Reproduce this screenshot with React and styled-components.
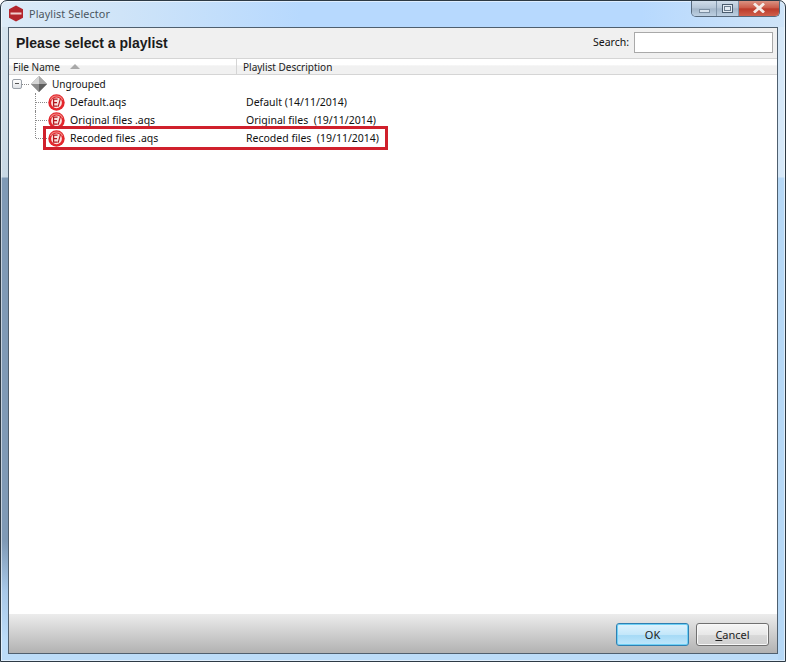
import styled, { createGlobalStyle } from "styled-components";

const GlobalStyle = createGlobalStyle`
  html, body {
    margin: 0;
    padding: 0;
    background: #fff;
  }
  * {
    box-sizing: border-box;
  }
`;

const rows = [
  { name: "Default.aqs", description: "Default (14/11/2014)" },
  { name: "Original files .aqs", description: "Original files  (19/11/2014)" },
  { name: "Recoded files .aqs", description: "Recoded files  (19/11/2014)", marked: true },
];

function AppLogo() {
  return (
    <svg width="16" height="17" viewBox="0 0 16 17">
      <path d="M8 0.5 L15 4.3 L15 12.7 L8 16.5 L1 12.7 L1 4.3 Z" fill="#b3262d" />
      <rect x="2.5" y="7.5" width="11" height="2" fill="#f0cfcf" />
    </svg>
  );
}

function GroupIcon() {
  return (
    <svg width="16" height="16" viewBox="0 0 16 16">
      <path d="M8 0 L16 8 L8 16 L0 8 Z" fill="#8f8f8f" />
      <path d="M8 0 L0 8 L8 8 Z" fill="#d6d6d6" />
      <path d="M8 0 L16 8 L8 8 Z" fill="#a8a8a8" />
      <path d="M0 8 L8 16 L8 8 Z" fill="#8c8c8c" />
      <path d="M16 8 L8 16 L8 8 Z" fill="#5f5f5f" />
    </svg>
  );
}

function PlaylistIcon() {
  return (
    <svg width="17" height="17" viewBox="0 0 17 17">
      <circle cx="8.5" cy="8.5" r="8.2" fill="#e3262c" />
      <path d="M2.5 6 A6.5 6.5 0 0 1 14.5 6" fill="none" stroke="#f28b86" strokeWidth="1.2" />
      <circle cx="8.5" cy="8.8" r="5.4" fill="#fbe3e0" />
      <path d="M9.6 5.2 H5.6 V12.2 H9.6 M5.6 8.6 H9" fill="none" stroke="#b3161c" strokeWidth="1.3" />
      <path d="M12.4 4.6 L10.2 12.6" stroke="#b3161c" strokeWidth="1.1" />
    </svg>
  );
}

export default function App() {
  return (
    <Window>
      <GlobalStyle />
      <TitleBar>
        <TitleLeft>
          <AppLogo />
          <TitleText>Playlist Selector</TitleText>
        </TitleLeft>
        <Controls>
          <MinButton>
            <MinimizeGlyph />
          </MinButton>
          <MaxButton>
            <MaximizeGlyph />
          </MaxButton>
          <CloseButton>
            <svg width="14" height="10" viewBox="0 0 14 10">
              <path d="M2 0.5 L12 9.5 M12 0.5 L2 9.5" stroke="#f4ebe7" strokeWidth="2.8" />
            </svg>
          </CloseButton>
        </Controls>
      </TitleBar>
      <Client>
        <Header>
          <Heading>Please select a playlist</Heading>
          <SearchBox>
            <SearchLabel>Search:</SearchLabel>
            <SearchInput />
          </SearchBox>
        </Header>
        <ColumnHeader>
          <NameColumn>
            File Name
            <SortArrow />
          </NameColumn>
          <DescriptionColumn>Playlist Description</DescriptionColumn>
        </ColumnHeader>
        <Tree>
          <GroupRow>
            <Expander />
            <Dots />
            <GroupIcon />
            <GroupLabel>Ungrouped</GroupLabel>
          </GroupRow>
          {rows.map((row, i) => (
            <FileRow key={row.name}>
              <Guide $last={i === rows.length - 1} />
              <PlaylistIcon />
              <FileName>{row.name}</FileName>
              <FileDescription>{row.description}</FileDescription>
              {row.marked && <Marker />}
            </FileRow>
          ))}
        </Tree>
        <Footer>
          <OkButton>OK</OkButton>
          <CancelButton>
            <u>C</u>ancel
          </CancelButton>
        </Footer>
      </Client>
    </Window>
  );
}

const uiFont = `"Noto Sans", "Open Sans", sans-serif`;

const Window = styled.div`
  width: 786px;
  height: 662px;
  display: flex;
  flex-direction: column;
  padding: 0 7px 7px;
  border: 1px solid #2d3a45;
  border-radius: 7px 7px 0 0;
  box-shadow: inset 0 0 0 1px rgba(255, 255, 255, 0.55);
  background-color: #bcdcf8;
  background-image:
    linear-gradient(90deg, #dcebf7 0, #cfe4f8 120px, #b7d9fe 300px, #b7d9fe 640px, #cfe4f8 100%),
    linear-gradient(180deg, #d8e6f0 0, #c8d8e4 176px, #7f9ab6 177px, #7f9ab6 540px, #a8c8e8 590px, #bcdcf8 640px),
    linear-gradient(180deg, #d6e8f8 0, #d6e8f8 176px, #b6d8f6 177px, #b6d8f6 100%);
  background-size: 100% 26px, 7px 100%, 7px 100%;
  background-position: top, left, right;
  background-repeat: no-repeat;
  font-family: ${uiFont};
  overflow: hidden;
`;

const TitleBar = styled.div`
  height: 26px;
  flex: none;
  margin-right: -2px;
  display: flex;
  justify-content: space-between;
  align-items: flex-start;
`;

const TitleLeft = styled.div`
  display: flex;
  align-items: center;
  gap: 5px;
  height: 25px;
`;

const TitleText = styled.span`
  font-size: 10.8px;
  letter-spacing: 0.1px;
  color: #4a5560;
`;

const Controls = styled.div`
  display: flex;
  height: 17px;
  margin-top: -1px;
  border: 1px solid #56697c;
  border-top: none;
  border-radius: 0 0 5px 5px;
  overflow: hidden;
`;

const MinButton = styled.div`
  width: 25px;
  display: flex;
  align-items: center;
  justify-content: center;
  border-right: 1px solid #8095aa;
  background: linear-gradient(#d3e0ec, #b4c5d6 50%, #a3b6c9 55%, #bdd0e2);
`;

const MaxButton = styled(MinButton)`
  width: 22px;
`;

const CloseButton = styled.div`
  width: 40px;
  display: flex;
  align-items: center;
  justify-content: center;
  background: linear-gradient(#dd9a8a, #cb5a48 50%, #bb3a2a 55%, #d0604c);
`;

const MinimizeGlyph = styled.span`
  width: 11px;
  height: 4px;
  margin-top: 5px;
  background: #d9e4ee;
  border: 1px solid #7b8ea1;
`;

const MaximizeGlyph = styled.span`
  width: 11px;
  height: 9px;
  border: 1px solid #4a5c6e;
  background: #e3ebf3;
  box-shadow: inset 0 0 0 1px #e3ebf3, inset 0 0 0 2px #6b7d8e;
`;

const Client = styled.div`
  flex: 1;
  display: flex;
  flex-direction: column;
  background: #fff;
  border: 1px solid #4f5f6e;
  min-height: 0;
`;

const Header = styled.div`
  height: 31px;
  flex: none;
  display: flex;
  justify-content: space-between;
  align-items: center;
  padding: 0 4px 0 7px;
  background: #f0f0f0;
  border-bottom: 1px solid #d5d5d5;
`;

const Heading = styled.h1`
  margin: 0;
  font-family: "Liberation Sans", Arial, sans-serif;
  font-size: 14px;
  font-weight: 700;
  color: #1b1b1b;
`;

const SearchBox = styled.div`
  display: flex;
  align-items: center;
  gap: 5px;
  margin-bottom: 2px;
`;

const SearchLabel = styled.span`
  font-size: 10.5px;
  color: #111;
`;

const SearchInput = styled.input`
  width: 139px;
  height: 21px;
  padding: 0;
  border: 1px solid #a9a9a9;
  background: #fff;
  outline: none;
`;

const ColumnHeader = styled.div`
  height: 16px;
  flex: none;
  display: flex;
  background: linear-gradient(#ffffff 0, #ffffff 40%, #f1f1f1 45%, #f1f1f1 100%);
  border-bottom: 1px solid #d5d5d5;
  font-size: 10px;
  line-height: 16px;
  color: #222;
`;

const NameColumn = styled.div`
  width: 228px;
  padding-left: 4px;
  display: flex;
  align-items: center;
  gap: 10px;
  border-right: 1px solid #d5d5d5;
`;

const SortArrow = styled.span`
  width: 0;
  height: 0;
  border-left: 5px solid transparent;
  border-right: 5px solid transparent;
  border-bottom: 5px solid #a9a9a9;
`;

const DescriptionColumn = styled.div`
  padding-left: 6px;
`;

const Tree = styled.div`
  flex: 1;
  background: #fff;
  min-height: 0;
`;

const GroupRow = styled.div`
  height: 18px;
  display: flex;
  align-items: center;
  padding-left: 3px;
  font-size: 10px;
  color: #111;
`;

const Expander = styled.span`
  width: 10px;
  height: 10px;
  position: relative;
  flex: none;
  border: 1px solid #9aa0a8;
  border-radius: 2px;
  background: linear-gradient(#fff, #dfe2e6);

  &::after {
    content: "";
    position: absolute;
    left: 2px;
    top: 3px;
    width: 4px;
    height: 1px;
    background: #555;
  }
`;

const Dots = styled.span`
  width: 7px;
  margin-right: 2px;
  flex: none;
  border-top: 1px dotted #8a8a8a;
`;

const GroupLabel = styled.span`
  margin-left: 5px;
`;

const FileRow = styled.div`
  height: 18px;
  position: relative;
  display: flex;
  align-items: center;
  padding-left: 39px;
  font-size: 10.5px;
  color: #111;
`;

const Guide = styled.span`
  position: absolute;
  left: 26px;
  top: 0;
  width: 12px;
  height: ${(p) => (p.$last ? "9px" : "18px")};
  border-left: 1px dotted #8a8a8a;

  &::after {
    content: "";
    position: absolute;
    left: 0;
    top: 9px;
    width: 11px;
    border-top: 1px dotted #8a8a8a;
  }
`;

const FileName = styled.span`
  width: 176px;
  margin-left: 5px;
  flex: none;
  white-space: pre;
`;

const FileDescription = styled.span`
  white-space: pre;
`;

const Marker = styled.span`
  position: absolute;
  left: 34px;
  top: -3px;
  width: 345px;
  height: 24px;
  border: 3px solid #d0202c;
`;

const Footer = styled.div`
  height: 39px;
  flex: none;
  display: flex;
  justify-content: flex-end;
  align-items: flex-start;
  gap: 7px;
  padding: 9px 8px 0 0;
  background: linear-gradient(#ececec, #b2b2b2);
`;

const DialogButton = styled.button`
  width: 73px;
  height: 23px;
  padding: 0;
  border-radius: 3px;
  font-family: ${uiFont};
  font-size: 11px;
  color: #222;
`;

const OkButton = styled(DialogButton)`
  border: 1px solid #2f80b2;
  background: linear-gradient(#e0f3fd, #c3e7fa 50%, #a6daf6 55%, #bfe7fb);
  box-shadow: inset 0 0 0 1px #6fd0f5;
`;

const CancelButton = styled(DialogButton)`
  border: 1px solid #707070;
  background: linear-gradient(#f6f6f6, #e8e8e8 50%, #d8d8d8 55%, #d0d0d0);
  box-shadow: inset 0 0 0 1px #f8f8f8;
`;
